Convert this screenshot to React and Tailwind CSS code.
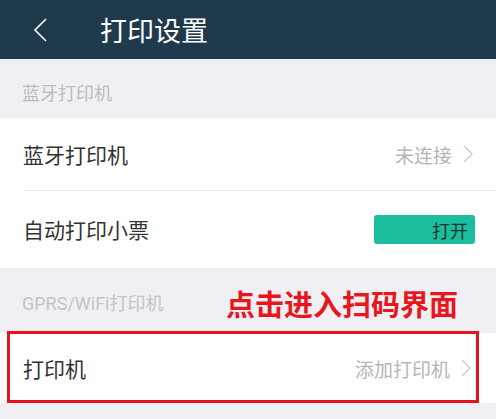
export default function App() {
  const cjk = { fontFamily: '"Noto Sans CJK SC", "Noto Sans", sans-serif' };
  const Chevron = () => (
    <svg width="12" height="20" viewBox="0 0 12 20" className="ml-[10px]">
      <path d="M2 2 L10 10 L2 18" fill="none" stroke="#d0d0d0" strokeWidth="1.6" />
    </svg>
  );
  return (
    <div className="w-[496px] h-[419px] bg-[#efeff4] overflow-hidden" style={cjk}>
      <div className="h-[59px] bg-[#1f3a4c] flex items-center">
        <svg width="16" height="24" viewBox="0 0 16 24" className="ml-[32px]">
          <path d="M14 1 L3 12 L14 23" fill="none" stroke="#ffffff" strokeWidth="1.6" />
        </svg>
        <span className="ml-[52px] text-[27px] text-white leading-none">打印设置</span>
      </div>
      <div className="h-[59px] flex items-center pl-[22px] pt-[6px]">
        <span className="text-[18px] text-[#bcbcbc] leading-none">蓝牙打印机</span>
      </div>
      <div className="bg-white">
        <div className="h-[72px] flex items-center pl-[23px] pr-[22px]">
          <span className="text-[21px] text-[#333333] leading-none flex-1">蓝牙打印机</span>
          <span className="text-[19px] text-[#b5b5b5] leading-none">未连接</span>
          <Chevron />
        </div>
        <div className="ml-[24px] h-px bg-[#ececec]" />
        <div className="h-[77px] flex items-center pl-[23px] pr-[21px]">
          <span className="text-[21px] text-[#333333] leading-none flex-1">自动打印小票</span>
          <div className="w-[101px] h-[29px] rounded-[3px] bg-[#1cbd9e] flex items-center justify-end pr-[7px]">
            <span className="text-[18px] text-[#143434] leading-none">打开</span>
          </div>
        </div>
      </div>
      <div className="h-[65px] flex items-center pl-[22px] pr-[38px] pt-[6px]">
        <span className="text-[18px] text-[#c4c4c4] leading-none flex-1" style={{ fontFamily: 'Roboto, "Noto Sans CJK SC", sans-serif' }}>GPRS/WiFi打印机</span>
        <span className="text-[29px] font-bold text-[#e8161d] leading-none">点击进入扫码界面</span>
      </div>
      <div className="relative bg-white h-[70px] flex items-center pl-[23px] pr-[24px]">
        <span className="text-[21px] text-[#333333] leading-none flex-1">打印机</span>
        <span className="text-[19px] text-[#b5b5b5] leading-none">添加打印机</span>
        <Chevron />
        <div className="absolute left-[7px] top-[-2px] w-[472px] h-[72px] border-[3px] border-[#e3141c]" />
      </div>
    </div>
  );
}
